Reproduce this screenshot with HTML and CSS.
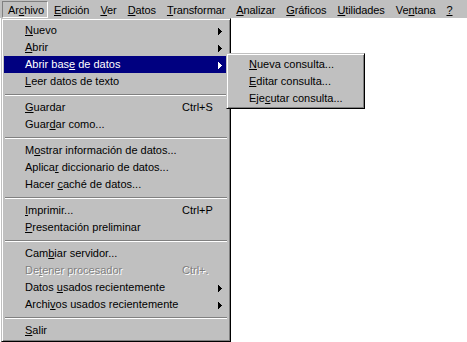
FILE: index.html
```html
<!DOCTYPE html>
<html lang="es">
<head>
<meta charset="utf-8">
<title>Archivo</title>
<link rel="stylesheet" href="styles.css">
</head>
<body>
<div class="app">
  <div class="menubar">
    <span class="mb-item pressed">Ar<u>c</u>hivo</span>
    <span class="mb-item"><u>E</u>dición</span>
    <span class="mb-item"><u>V</u>er</span>
    <span class="mb-item"><u>D</u>atos</span>
    <span class="mb-item"><u>T</u>ransformar</span>
    <span class="mb-item"><u>A</u>nalizar</span>
    <span class="mb-item"><u>G</u>ráficos</span>
    <span class="mb-item"><u>U</u>tilidades</span>
    <span class="mb-item">Ve<u>n</u>tana</span>
    <span class="mb-item"><u>?</u></span>
  </div>
  <div class="workspace"></div>

  <div class="menu main">
    <div class="item"><span class="label"><u>N</u>uevo</span><span class="key"></span><svg class="arrow" width="4" height="7" viewBox="0 0 4 7"><rect x="0" y="0" width="1" height="7"/><rect x="1" y="1" width="1" height="5"/><rect x="2" y="2" width="1" height="3"/><rect x="3" y="3" width="1" height="1"/></svg></div>
    <div class="item"><span class="label"><u>A</u>brir</span><span class="key"></span><svg class="arrow" width="4" height="7" viewBox="0 0 4 7"><rect x="0" y="0" width="1" height="7"/><rect x="1" y="1" width="1" height="5"/><rect x="2" y="2" width="1" height="3"/><rect x="3" y="3" width="1" height="1"/></svg></div>
    <div class="item active"><span class="label">Abrir bas<u>e</u> de datos</span><span class="key"></span><svg class="arrow" width="4" height="7" viewBox="0 0 4 7"><rect x="0" y="0" width="1" height="7"/><rect x="1" y="1" width="1" height="5"/><rect x="2" y="2" width="1" height="3"/><rect x="3" y="3" width="1" height="1"/></svg></div>
    <div class="item"><span class="label"><u>L</u>eer datos de texto</span></div>
    <div class="sep"></div>
    <div class="item"><span class="label"><u>G</u>uardar</span><span class="key">Ctrl+S</span></div>
    <div class="item"><span class="label">Guar<u>d</u>ar como...</span></div>
    <div class="sep"></div>
    <div class="item"><span class="label">M<u>o</u>strar información de datos...</span></div>
    <div class="item"><span class="label">Aplica<u>r</u> diccionario de datos...</span></div>
    <div class="item"><span class="label">Hacer <u>c</u>aché de datos...</span></div>
    <div class="sep"></div>
    <div class="item"><span class="label"><u>I</u>mprimir...</span><span class="key">Ctrl+P</span></div>
    <div class="item"><span class="label"><u>P</u>resentación preliminar</span></div>
    <div class="sep"></div>
    <div class="item"><span class="label">Cam<u>b</u>iar servidor...</span></div>
    <div class="item disabled"><span class="label">De<u>t</u>ener procesador</span><span class="key">Ctrl+.</span></div>
    <div class="item"><span class="label">Datos <u>u</u>sados recientemente</span><span class="key"></span><svg class="arrow" width="4" height="7" viewBox="0 0 4 7"><rect x="0" y="0" width="1" height="7"/><rect x="1" y="1" width="1" height="5"/><rect x="2" y="2" width="1" height="3"/><rect x="3" y="3" width="1" height="1"/></svg></div>
    <div class="item"><span class="label">Archi<u>v</u>os usados recientemente</span><span class="key"></span><svg class="arrow" width="4" height="7" viewBox="0 0 4 7"><rect x="0" y="0" width="1" height="7"/><rect x="1" y="1" width="1" height="5"/><rect x="2" y="2" width="1" height="3"/><rect x="3" y="3" width="1" height="1"/></svg></div>
    <div class="sep"></div>
    <div class="item"><span class="label"><u>S</u>alir</span></div>
  </div>

  <div class="menu sub">
    <div class="item"><span class="label"><u>N</u>ueva consulta...</span></div>
    <div class="item"><span class="label"><u>E</u>ditar consulta...</span></div>
    <div class="item"><span class="label">Eje<u>c</u>utar consulta...</span></div>
  </div>
</div>
</body>
</html>
```

FILE: styles.css
```css
html, body {
  margin: 0;
  padding: 0;
  background: #ffffff;
}

.app {
  position: relative;
  width: 467px;
  height: 342px;
  overflow: hidden;
  font-family: "Liberation Sans", Arial, sans-serif;
  font-size: 11px;
  color: #000;
  background: #ffffff;
  display: flex;
  flex-direction: column;
}

u {
  text-decoration: underline;
  text-decoration-thickness: 1px;
  text-underline-offset: 1px;
}

.menubar {
  height: 18px;
  flex: 0 0 18px;
  background: #c0c0c0;
  display: flex;
  align-items: flex-start;
  padding-left: 2px;
  box-sizing: border-box;
}

.mb-item {
  display: block;
  height: 17px;
  margin-top: 1px;
  box-sizing: border-box;
  padding: 1px 4px 0 5px;
  line-height: 15px;
  border: 1px solid transparent;
  white-space: nowrap;
  letter-spacing: -0.1px;
}

.mb-item.pressed {
  border-color: #808080 #ffffff #ffffff #808080;
  padding: 1px 3px 0 5px;
}

.workspace {
  flex: 1;
  background: #ffffff;
}

.menu {
  position: absolute;
  background: #c0c0c0;
  box-sizing: border-box;
  border: 1px solid;
  border-color: #c0c0c0 #000000 #000000 #c0c0c0;
  box-shadow: inset 1px 1px 0 #ffffff, inset -1px -1px 0 #808080;
  display: flex;
  flex-direction: column;
}

.menu.main {
  left: 1px;
  top: 18px;
  width: 230px;
  height: 324px;
  padding: 3px 3px 0 2px;
}

.menu.sub {
  left: 226px;
  top: 53px;
  width: 139px;
  height: 56px;
  padding: 2px 3px 0 2px;
}

.item {
  height: 17px;
  line-height: 17px;
  display: grid;
  grid-template-columns: 157px 36px 4px;
  align-items: center;
  padding-left: 21px;
  white-space: nowrap;
}

.menu.sub .item {
  padding-left: 20px;
  grid-template-columns: 1fr;
}

.item .label,
.item .key {
  line-height: 17px;
}

.item .arrow {
  fill: currentColor;
  display: block;
  margin-top: 1px;
}

.item.active {
  background: #000080;
  color: #ffffff;
}

.item.disabled {
  color: #808080;
  text-shadow: 1px 1px 0 #ffffff;
}

.item.disabled u {
  text-decoration-color: #808080;
}

.sep {
  height: 9px;
  position: relative;
  margin: 0 0 0 1px;
}

.sep::before {
  content: "";
  position: absolute;
  left: 0;
  right: 0;
  top: 4px;
  height: 1px;
  background: #808080;
  border-bottom: 1px solid #ffffff;
}
```
